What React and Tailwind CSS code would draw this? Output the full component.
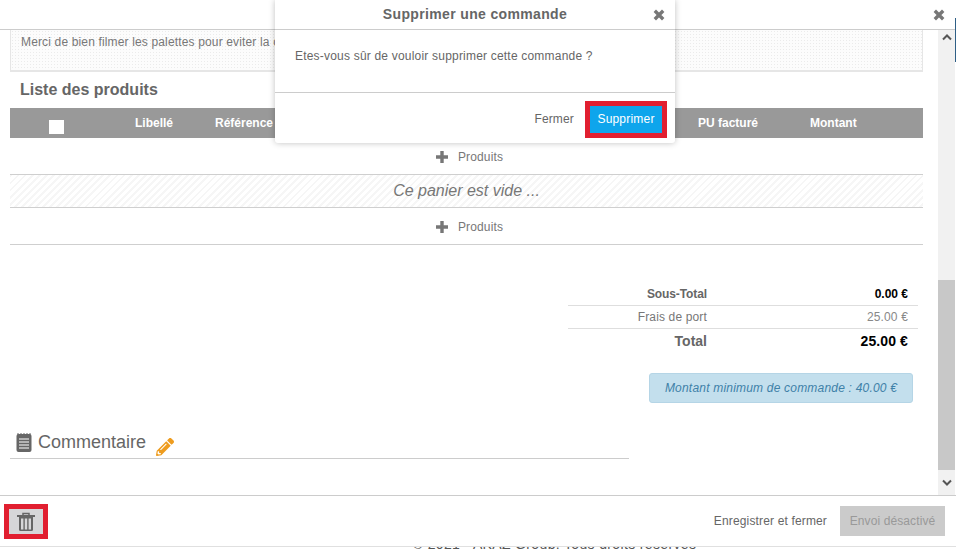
import { FaPencilAlt } from 'react-icons/fa';

const CloseIcon = ({ className }) => (
  <svg className={className} width="12" height="12" viewBox="0 0 12 12">
    <path d="M1.8 1.8l8.4 8.4M10.2 1.8l-8.4 8.4" stroke="#777" strokeWidth="3.4" fill="none" />
  </svg>
);

const PlusIcon = () => (
  <svg width="12" height="12" viewBox="0 0 12 12">
    <path d="M4.3 0h3.4v4.3H12v3.4H7.7V12H4.3V7.7H0V4.3h4.3z" fill="#777" />
  </svg>
);

const Chevron = ({ up, className }) => (
  <svg className={className} width="10" height="7" viewBox="0 0 10 7">
    <path d={up ? 'M1 5.5l4-4 4 4' : 'M1 1.5l4 4 4-4'} stroke="#555" strokeWidth="2" fill="none" />
  </svg>
);

const NoteIcon = () => (
  <svg width="16" height="19" viewBox="0 0 16 19">
    <rect x="0.5" y="1" width="15" height="18" rx="2" fill="#666" />
    <path d="M2 0v3M5 0v3M8 0v3M11 0v3M14 0v3" stroke="#666" strokeWidth="1" />
    <path d="M3 6h10M3 9h10M3 12h10M3 15h10" stroke="#fff" strokeWidth="1" />
  </svg>
);

const TrashIcon = () => (
  <svg width="18" height="19" viewBox="0 0 18 19">
    <path d="M6 3V1.5h6V3" stroke="#666" strokeWidth="1.5" fill="none" />
    <path d="M0 3h18v2H0z" fill="#666" />
    <path d="M2 5h14v12.5a1.5 1.5 0 0 1-1.5 1.5h-11A1.5 1.5 0 0 1 2 17.5z" fill="#666" />
    <path d="M4 6.5h2.4v11H4zM7.8 6.5h2.4v11H7.8zM11.6 6.5H14v11h-2.4z" fill="#d6d6d8" />
  </svg>
);

const AddRow = () => (
  <div className="h-[37px] flex items-center justify-center gap-[10px] pt-[1px] pl-[6px] border-b border-[#cfcfcf] text-[12px] tracking-[0.15px] text-[#777]">
    <PlusIcon />
    <span>Produits</span>
  </div>
);

const App = () => {
  return (
    <div className="relative w-[956px] h-[549px] overflow-hidden bg-white font-['Liberation_Sans',Arial,sans-serif]">
      <div className="relative z-10 bg-white h-[547px] flex flex-col border-b border-[#e0e0e0]">
        <div className="h-[30px] shrink-0 border-b border-[#cccccc] flex justify-end items-center pr-[11px]">
          <CloseIcon />
        </div>

        <div className="flex-1 flex min-h-0">
          <div className="w-[938px] overflow-hidden pl-[10px] pr-[15px]">
            <div className="h-[42px] border border-t-0 border-b-2 border-[#e6e6e6] bg-[radial-gradient(#ebebeb_0.6px,#fcfcfc_0.7px)] bg-[length:3px_3px] px-[10px] pt-[4px] text-[12px] tracking-[0.15px] leading-[17px] text-[#777]">
              Merci de bien filmer les palettes pour eviter la casse
            </div>

            <div className="h-[36px] pl-[10px] flex items-center text-[16px] font-bold text-[#666]">Liste des produits</div>

            <div className="h-[30px] bg-[#999999] relative text-[12px] font-bold text-white">
              <div className="absolute left-[39px] top-[12px] w-[15px] h-[14px] bg-white" />
              <span className="absolute left-[125px] top-[6px]">Libellé</span>
              <span className="absolute left-[205px] top-[6px]">Référence</span>
              <span className="absolute left-[688px] top-[6px]">PU facturé</span>
              <span className="absolute left-[800px] top-[6px]">Montant</span>
            </div>

            <AddRow />
            <div className="h-[33px] flex items-center justify-center border-b border-[#cfcfcf] bg-[repeating-linear-gradient(135deg,#f6f6f6_0px,#f6f6f6_2px,#ffffff_2px,#ffffff_5px)] text-[16px] italic text-[#777]">
              Ce panier est vide ...
            </div>
            <AddRow />

            <div className="flex justify-end pr-[5px] mt-[37px]">
              <div className="w-[350px] text-[12px]">
                <div className="h-[24px] flex items-center border-b border-[#dedede]">
                  <span className="w-[139px] text-right font-bold tracking-[-0.1px] text-[#666]">Sous-Total</span>
                  <span className="flex-1 text-right pr-[10px] font-bold text-black">0.00 €</span>
                </div>
                <div className="h-[23px] flex items-center border-b border-[#dedede] tracking-[0.15px]">
                  <span className="w-[139px] text-right text-[#777]">Frais de port</span>
                  <span className="flex-1 text-right pr-[10px] text-[#888]">25.00 €</span>
                </div>
                <div className="h-[25px] flex items-center text-[14px] font-bold">
                  <span className="w-[139px] text-right text-[#666]">Total</span>
                  <span className="flex-1 text-right pr-[10px] tracking-[0.1px] text-black">25.00 €</span>
                </div>
              </div>
            </div>

            <div className="flex justify-end pr-[10px] mt-[19px]">
              <div className="w-[264px] h-[30px] rounded-[3px] bg-[#c3dfed] border border-[#b5d5e6] flex items-center justify-center text-[12px] tracking-[0.2px] italic text-[#3f81a8]">
                Montant minimum de commande : 40.00 €
              </div>
            </div>

            <div className="w-[619px] h-[42px] mt-[14px] border-b border-[#cccccc] flex items-center pt-[10px] pl-[6px]">
              <NoteIcon />
              <span className="ml-[6px] text-[18px] text-[#666]">Commentaire</span>
              <FaPencilAlt className="ml-[10px] mt-[8px] text-[#ee9c1e] text-[18px]" />
            </div>
          </div>

          <div className="w-[17px] bg-[#f1f1f1] flex flex-col items-center">
            <Chevron up className="mt-[4px]" />
            <div className="w-full h-[190px] bg-[#c8c8c8] mt-auto" />
            <div className="h-[25px] flex items-center">
              <Chevron />
            </div>
          </div>
        </div>

        <div className="h-[51px] shrink-0 border-t border-[#cccccc] flex items-center justify-between pl-[4px] pr-[11px]">
          <div className="w-[44px] h-[35px] border-[5px] border-[#e11f30] bg-[#d6d6d8] flex items-center justify-center">
            <TrashIcon />
          </div>
          <div className="flex items-center text-[12px] tracking-[0.15px]">
            <span className="text-[#666] mr-[13px]">Enregistrer et fermer</span>
            <div className="w-[105px] h-[30px] bg-[#cbcbcb] text-[#999] tracking-[0.1px] flex items-center justify-center">Envoi désactivé</div>
          </div>
        </div>
      </div>

      <div className="absolute z-10 left-[955px] top-[18px] w-[1px] h-[44px] bg-[#2f5f86]" />

      {/* modal de confirmation */}
      <div className="absolute z-20 left-[275px] top-0 w-[400px] h-[143px] bg-white rounded-b-[3px] shadow-[0_0_6px_rgba(0,0,0,0.25)] flex flex-col">
        <div className="h-[30px] shrink-0 border-b border-[#cccccc] flex items-center justify-center relative">
          <span className="text-[14px] font-bold text-[#666] tracking-[0.35px]">Supprimer une commande</span>
          <CloseIcon className="absolute right-[10px] top-[9px]" />
        </div>
        <div className="h-[63px] shrink-0 border-b border-[#cccccc] pl-[20px] pt-[18px] text-[12px] tracking-[0.2px] leading-[17px] text-[#666]">
          Etes-vous sûr de vouloir supprimer cette commande ?
        </div>
        <div className="flex-1 flex items-start justify-end pr-[8px] pt-[8px]">
          <span className="text-[12px] tracking-[0.15px] text-[#666] mr-[11px] mt-[9px]">Fermer</span>
          <div className="w-[82px] h-[37px] border-[5px] border-[#e11f30] bg-[#0ea5ec] flex items-center justify-center text-[12px] tracking-[0.2px] text-white pb-[2px]">
            Supprimer
          </div>
        </div>
      </div>

      {/* pied de page derriere le panneau */}
      <div className="text-center text-[14px] leading-[16px] -mt-[11px] pl-[153px] tracking-[0.35px] text-[#555]">© 2021 - AKAZ Group, Tous droits réservés</div>
    </div>
  );
};

export default App;
